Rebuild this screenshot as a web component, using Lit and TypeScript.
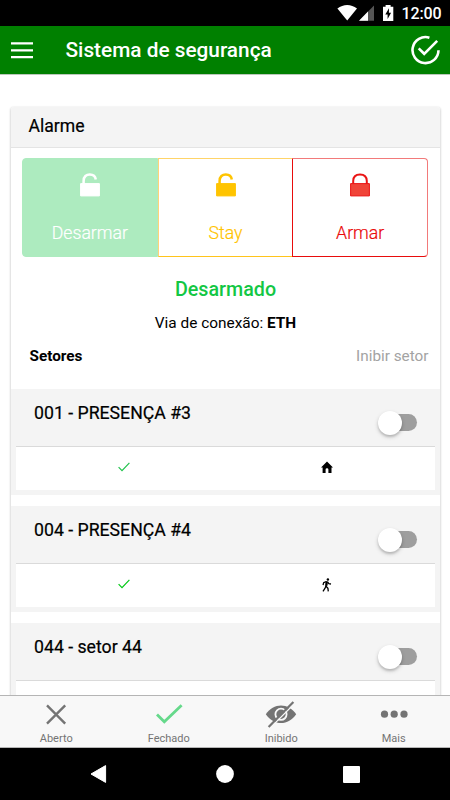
import { LitElement, html, css, svg, nothing } from "lit";
import { customElement, property } from "lit/decorators.js";

const homeIcon = svg`<path d="M0 6.4 6 .4l6 6h-1.5V12H7.4V8.6a1.4 1.4 0 0 0-2.8 0V12H1.6V6.4z" fill="#000"/>`;
const walkIcon = svg`<g fill="none" stroke="#000" stroke-width="1.3" stroke-linejoin="round"><path d="M5.6 3.3 5 8.2 6.9 10.2 7.3 13.4" /><path d="M5.2 7.6 3.9 10.4 2 13.3"/><path d="M5.4 3.5 2.7 4.6 2 7"/><path d="M6.4 3.6 7.8 5.6 10 6"/><path d="M5.8 3.6 5.4 7.6" stroke-width="2.2"/></g><circle cx="6.9" cy="1.5" r="1.2" fill="#000"/>`;

@customElement("sector-row")
export class SectorRow extends LitElement {
  @property() name = "";
  @property() kind = "home";
  @property() tone = "#1fc24b";

  static styles = css`
    :host { display: block; box-sizing: border-box; height: 106px; padding: 5px; background: #f4f4f4; flex: none; }
    .head { display: flex; justify-content: space-between; box-sizing: border-box; height: 53px; padding: 0 18px; border-bottom: 1px solid #dadada; }
    .name { font-size: 17.7px; font-weight: 400; line-height: 20px; padding-top: 9px; color: #000; -webkit-text-stroke: .2px #000; }
    .switch { display: flex; align-items: center; width: 36px; height: 17px; margin-top: 20px; border-radius: 9px; background: #9e9e9e; }
    .knob { width: 24px; height: 24px; flex: none; margin-left: -3px; border-radius: 50%; background: #fff; box-shadow: 0 2px 2px rgba(0,0,0,.12), 0 2px 4px rgba(0,0,0,.18); }
    .info { display: grid; grid-template-columns: 215px 191px; height: 43px; background: #fff; align-items: center; justify-items: center; }
    svg { display: block; }
    .tick { margin-bottom: 3px; }
    .home { margin: 0 0 4px; }
    .walk { margin: 0 0 2px; }
  `;

  render() {
    return html`
      <div class="head"><div class="name">${this.name}</div><div class="switch"><div class="knob"></div></div></div>
      <div class="info">
        <svg class="tick" width="12" height="10" viewBox="0 0 12 10"><path d="M.6 5.2 4 8.6 11.4.9" fill="none" stroke=${this.tone} stroke-width="1.2"/></svg>
        ${this.kind === "home"
          ? html`<svg class="home" width="12" height="12" viewBox="0 0 12 12">${homeIcon}</svg>`
          : html`<svg class="walk" width="12" height="14" viewBox="0 0 12 14">${walkIcon}</svg>`}
      </div>`;
  }
}

@customElement("app-root")
export class AppRoot extends LitElement {
  static styles = css`
    :host { display: flex; flex-direction: column; width: 450px; height: 800px; overflow: hidden; background: #fff; color: #000; font-family: Roboto, sans-serif; }
    svg { display: block; flex: none; }
    .status { display: flex; height: 26px; flex: none; background: #000; color: #fff; justify-content: flex-end; padding-right: 8.5px; }
    .clock { font-size: 16px; font-weight: 500; line-height: 28px; margin-left: 7px; letter-spacing: -.1px; }
    .bar { display: flex; align-items: center; box-sizing: border-box; height: 49px; flex: none; background: #008000; border-bottom: 1px solid #bac8ba; color: #fff; padding: 0 9px 0 11px; }
    .title { flex: 1; font-size: 20.8px; font-weight: 500; line-height: 28px; margin-left: 32.5px; }
    .content { flex: 1; min-height: 0; overflow: hidden; padding: 32px 10px 0 11px; }
    .card { display: flex; flex-direction: column; height: 760px; border-radius: 3px; background: #fff; box-shadow: 0 1px 2px 1px rgba(0,0,0,.14); }
    .cardhead { box-sizing: border-box; height: 41px; flex: none; padding-left: 17.5px; line-height: 39px; font-size: 17.6px; font-weight: 400; background: #f4f4f4; border-bottom: 1px solid #e4e4e4; border-radius: 3px 3px 0 0; -webkit-text-stroke: .2px #000; }
    .modes { display: flex; flex: none; width: 406px; height: 100px; margin: 10px 0 0 11px; }
    .mode { display: flex; flex-direction: column; align-items: center; box-sizing: border-box; height: 99px; flex: 1; padding-top: 14px; border: 1px solid; font-size: 17.7px; font-weight: 300; -webkit-text-stroke: .2px currentColor; }
    .mode svg { margin-bottom: 25px; }
    .mode span { line-height: 22px; }
    .off { background: #adebbf; border-color: #adebbf; color: #fff; border-radius: 4px 0 0 4px; }
    .stay { color: #ffc400; border-color: #ffd468 transparent #ffc41c #ffd27a; border-right: 0; }
    .arm { color: #ea0b0b; border-color: #f27a7a #f27a7a #e80c0c #e80c0c; border-radius: 0 4px 4px 0; }
    .state { flex: none; text-align: center; margin-top: 20px; line-height: 24px; font-size: 19.7px; font-weight: 500; color: #13c744; }
    .via { flex: none; text-align: center; margin-top: 11px; line-height: 20px; font-size: 15.4px; }
    .via b { font-weight: 700; }
    .cols { display: flex; justify-content: space-between; flex: none; padding: 0 11.5px 0 18.5px; margin-top: 13px; line-height: 20px; font-size: 15.3px; height: 43px; }
    .muted { color: #a3a3a3; }
    .list { display: flex; flex-direction: column; gap: 11px; flex: none; }
    .tabs { display: flex; box-sizing: border-box; height: 53px; flex: none; background: #f8f8f8; border-top: 1px solid #b5b5b5; border-bottom: 1px solid #b5b5b5; }
    .tab { display: flex; flex-direction: column; align-items: center; width: 112.7px; color: #747474; font-size: 11px; }
    .tab svg { margin-top: 4px; margin-bottom: 1px; }
    .tab span { line-height: 15px; }
    .nav { height: 52px; flex: none; background: #000; display: flex; align-items: center; justify-content: space-between; padding: 0 90px; }
  `;

  private lock(open: boolean, fill: string, color: string) {
    return html`<svg width="22" height="24" viewBox="0 0 22 24">
      <path d=${open ? "M4.6 11V8C4.6 3.5 7.4 1.4 10.8 1.4c3.3 0 5.6 2 6 5.1" : "M4.2 11V8c0-4.4 2.9-6.6 6.8-6.6s6.8 2.2 6.8 6.6v3"} fill="none" stroke=${color} stroke-width=${open ? 2.5 : 2}/>
      <path d="M1.6 10.6h18.8v12.3H1.6z" fill=${fill} stroke=${color}/>
    </svg>`;
  }

  private tab(label: string, icon: unknown) {
    return html`<div class="tab"><svg width="32" height="30" viewBox="0 0 32 30" fill="none" stroke="#747474" stroke-width="2.4">${icon ?? nothing}</svg><span>${label}</span></div>`;
  }

  render() {
    return html`
      <div class="status">
        <svg width="57" height="26" viewBox="338 0 57 26">
          <path d="M338.4 8.6c6-4.7 13.6-4.7 19.6 0L348.2 20.6z" fill="#fff"/>
          <path d="M375 5.5v15.2h-15z" fill="#555"/><path d="M369 11.5v9.2h-9z" fill="#fff"/>
          <path d="M384 6.8h2.6V5h5v1.8h2.7V21H384z" fill="#fff"/><path d="M390 8.2 386.3 14.4h2.3v4.7l3.5-6.3h-2.2z" fill="#000"/>
        </svg>
        <div class="clock">12:00</div>
      </div>
      <div class="bar">
        <svg width="22" height="18" viewBox="0 0 22 18"><path d="M0 2.4h22M0 9.4h22M0 16.1h22" stroke="#fff" stroke-width="2.2"/></svg>
        <div class="title">Sistema de segurança</div>
        <svg width="31" height="30" viewBox="410 35 31 30" fill="none" stroke="#fff" stroke-width="2.6"><path d="M429.4 37.7A13 13 0 1 0 438.5 50.3"/><path d="M418.7 48.4 424.2 53.8 437.2 40.8"/></svg>
      </div>
      <div class="content">
        <div class="card">
          <div class="cardhead">Alarme</div>
          <div class="modes">
            <div class="mode off">${this.lock(true, "#fff", "#fff")}<span>Desarmar</span></div>
            <div class="mode stay">${this.lock(true, "#ffc400", "#ffc400")}<span>Stay</span></div>
            <div class="mode arm">${this.lock(false, "#f04438", "#ea1414")}<span>Armar</span></div>
          </div>
          <div class="state">Desarmado</div>
          <div class="via">Via de conexão: <b>ETH</b></div>
          <div class="cols"><b>Setores</b><span class="muted">Inibir setor</span></div>
          <div class="list">
            <sector-row name="001 - PRESENÇA #3" kind="home"></sector-row>
            <sector-row name="004 - PRESENÇA #4" kind="walk" tone="#00c814"></sector-row>
            <sector-row name="044 - setor 44" kind="walk"></sector-row>
          </div>
        </div>
      </div>
      <div class="tabs">
        ${this.tab("Aberto", svg`<path d="M7 5.4 25.2 23.6M25.2 5.4 7 23.6"/>`)}
        ${this.tab("Fechado", svg`<path d="M4 14.5 11.3 21.8 28.6 5.3" stroke="#66d98b" stroke-width="2.8"/>`)}
        ${this.tab("Inibido", svg`<path d="M.8 14.3C8.5 2.6 23.5 2.6 31.2 14.3 23.5 26 8.5 26 .8 14.3z" fill="#747474" stroke="none"/><circle cx="16" cy="14.3" r="5.6" stroke="#f8f8f8" stroke-width="1.8"/><path d="M5 28 30 3" stroke="#f8f8f8" stroke-width="1.4"/><path d="M3.6 27 28.4 2" stroke-width="2.2"/>`)}
        ${this.tab("Mais", svg`<g fill="#747474" stroke="none"><circle cx="6.5" cy="14.2" r="3.6"/><circle cx="16.2" cy="14.2" r="3.6"/><circle cx="26" cy="14.2" r="3.6"/></g>`)}
      </div>
      <div class="nav">
        <svg width="17" height="20" viewBox="0 0 17 20"><path d="M1 10 15.6 1.6v16.8z" fill="#fff" stroke="#fff" stroke-linejoin="round"/></svg>
        <svg width="18" height="18" viewBox="0 0 18 18"><circle cx="9" cy="9" r="8.9" fill="#fff"/></svg>
        <svg width="17" height="17" viewBox="0 0 17 17"><rect width="17" height="17" rx="1" fill="#fff"/></svg>
      </div>`;
  }
}
